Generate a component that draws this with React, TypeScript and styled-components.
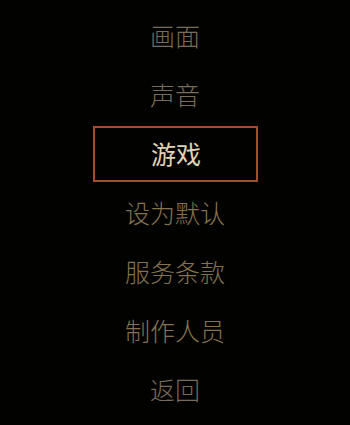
import React from "react";
import styled, { createGlobalStyle } from "styled-components";

const Global = createGlobalStyle`
  html, body {
    margin: 0;
    padding: 0;
    background: #000;
  }
  #root {
    width: 350px;
    height: 425px;
  }
`;

const Screen = styled.div`
  width: 350px;
  height: 425px;
  background: #020201;
  box-sizing: border-box;
  padding-top: 6px;
  display: flex;
  flex-direction: column;
  align-items: center;
  overflow: hidden;
`;

const Row = styled.div`
  height: 59px;
  width: 100%;
  display: flex;
  align-items: center;
  justify-content: center;
`;

type Tone = "muted" | "gold" | "active";

const colors: Record<Tone, string> = {
  muted: "#776b5a",
  gold: "#84724e",
  active: "#e0d4b6",
};

const Label = styled.span<{ $tone: Tone }>`
  font-family: "Noto Sans CJK SC", "Noto Sans CJK JP", sans-serif;
  font-size: 25px;
  font-weight: ${(p) => (p.$tone === "active" ? 400 : 300)};
  line-height: 1;
  letter-spacing: 0;
  color: ${(p) => colors[p.$tone]};
`;

const Selected = styled.div`
  width: 165px;
  height: 56px;
  box-sizing: border-box;
  border: 2px solid #a54d2d;
  display: flex;
  align-items: center;
  justify-content: center;
  padding-left: 2px;
`;

const items: { text: string; tone: Tone }[] = [
  { text: "画面", tone: "muted" },
  { text: "声音", tone: "muted" },
  { text: "游戏", tone: "active" },
  { text: "设为默认", tone: "gold" },
  { text: "服务条款", tone: "gold" },
  { text: "制作人员", tone: "gold" },
  { text: "返回", tone: "muted" },
];

export default function App() {
  return (
    <>
      <Global />
      <Screen>
        {items.map((it) =>
          it.tone === "active" ? (
            <Row key={it.text}>
              <Selected>
                <Label $tone={it.tone}>{it.text}</Label>
              </Selected>
            </Row>
          ) : (
            <Row key={it.text}>
              <Label $tone={it.tone}>{it.text}</Label>
            </Row>
          )
        )}
      </Screen>
    </>
  );
}
